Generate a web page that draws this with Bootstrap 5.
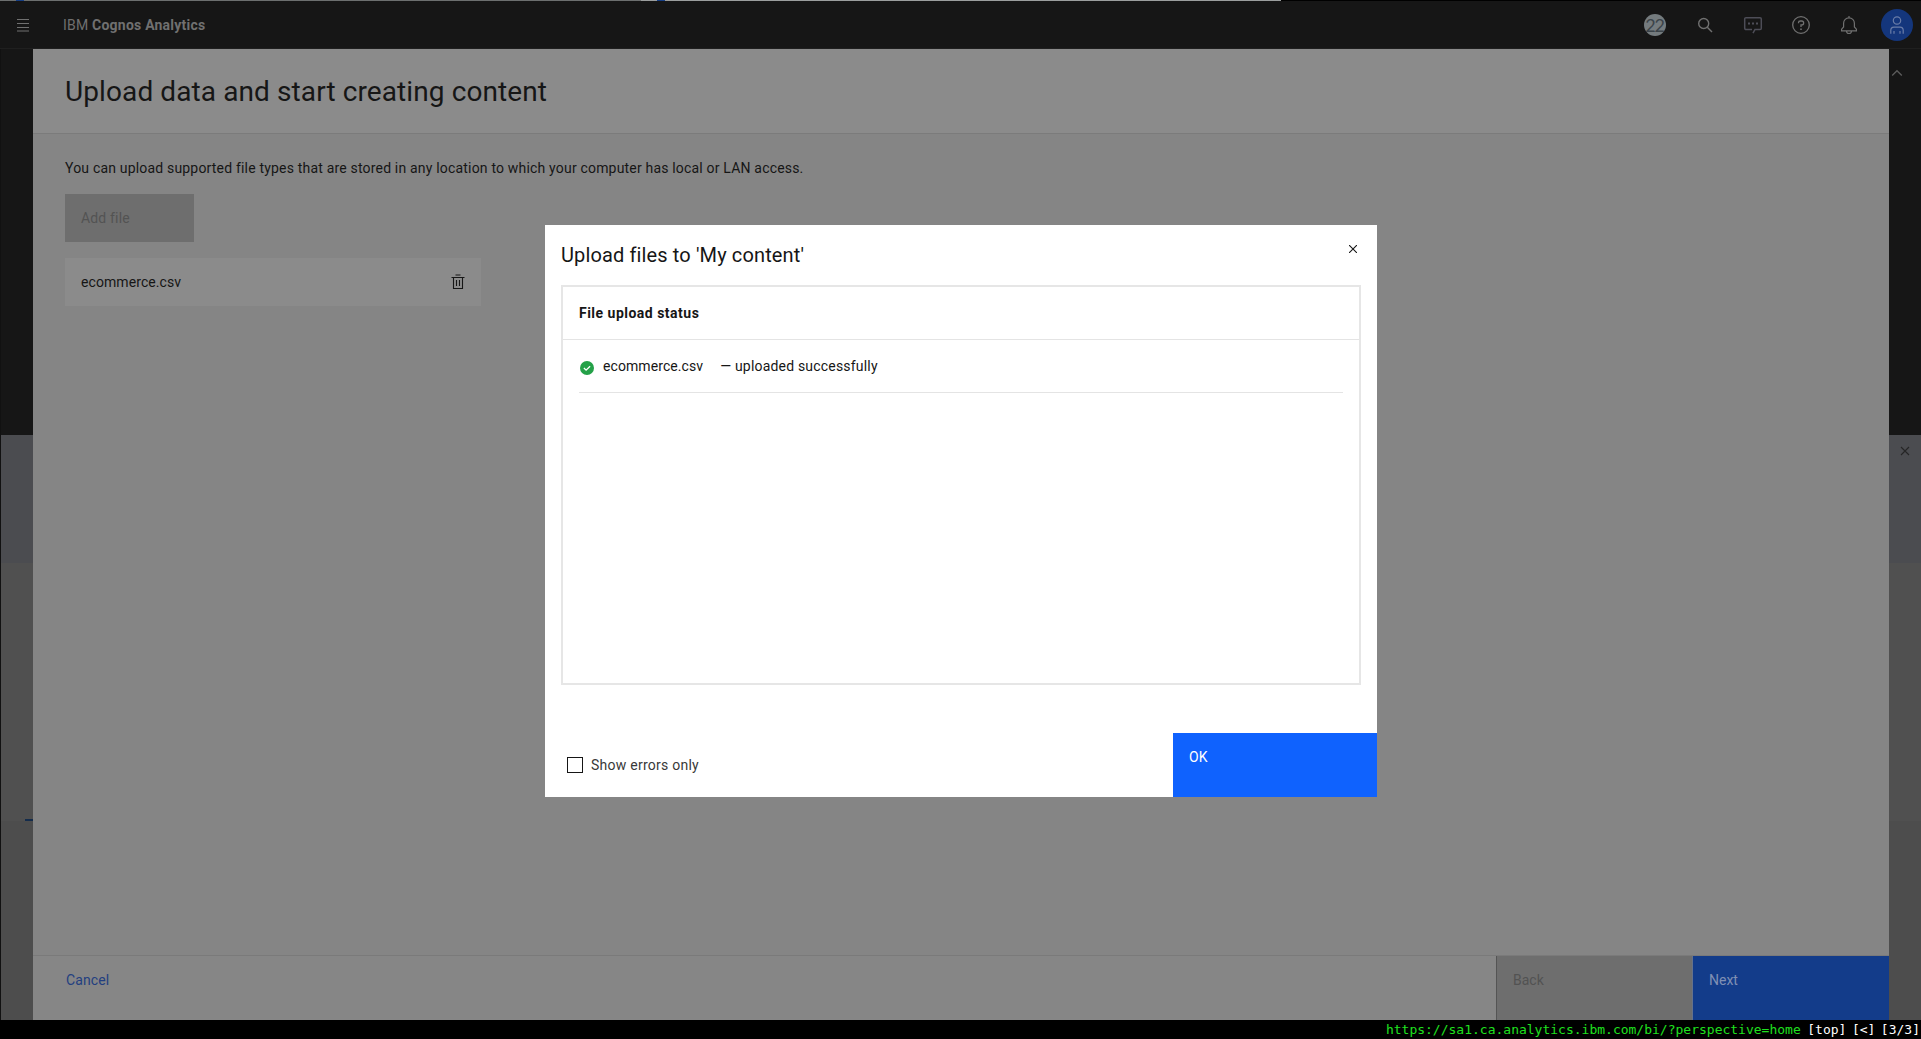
<!DOCTYPE html>
<html lang="en">
<head>
<meta charset="utf-8">
<title>IBM Cognos Analytics</title>
<link href="https://cdn.jsdelivr.net/npm/bootstrap@5.3.0/dist/css/bootstrap.min.css" rel="stylesheet">
<style>
body{width:1921px;height:1039px;overflow:hidden;background:#161616;font-family:Roboto,"Noto Sans",sans-serif;font-size:14px;line-height:18px;color:#161616}
svg{display:block;fill:none;stroke:currentColor;flex:none}
.t{white-space:nowrap}
.tabstrip{height:1px;background:#000}
.tabstrip .tab-a{width:641px;background:#6c6f6f}
.tabstrip .tab-b{width:640px;background:#9b9e9e}
.tabstrip .fav{width:8px;margin-left:16px;background:#163f86}
.appbar{height:48px;border-bottom:1px solid #1f1f1f;color:#707070;padding:0 0 0 16px}
.brand{margin-left:33px;letter-spacing:.22px}
.tool{width:48px;height:46px}
.tool-chat{color:#4d4d57}
.tool-count{padding-right:4px}
.count{width:22px;height:22px;border-radius:50%;background:#747b7e;color:#3b4349;font-size:18px;font-family:Lato,sans-serif;letter-spacing:-1.2px;padding-right:1px}
.avatar{width:32px;height:32px;border-radius:50%;background:#14367c;color:#6a7da8}
.rail{width:33px;background:#4d4d4d;border-left:1px solid #111}
.rail-r{width:32px;border-left:0;color:#5c5c5c}
.band-1{height:386px;background:#161616}
.band-2{height:128px;background:#4b4c50;color:#262626}
.band-3{height:258px;background:#505050}
.dash{width:8px;height:2px;background:#142c4c}
.panel{background:#858585}
.panel-title{height:85px;background:#8b8b8b;border-bottom:1px solid #7b7b7b;padding-left:32px}
.h-page{font-size:28px;line-height:36px;margin-top:25px;letter-spacing:.1px}
.panel-main{padding:25px 32px 0}
.desc{letter-spacing:.185px}
.btn-add{width:129px;height:48px;margin-top:17px;background:#6e6e6e;color:#535353;padding-left:16px;letter-spacing:.16px}
.filerow{width:416px;height:48px;margin-top:16px;background:#8b8b8b;padding:0 15px 0 16px}
.fname{letter-spacing:.08px}
.panel-foot{height:65px;border-top:1px solid #7a7a7a;background:#868686}
.footbtn{width:196px;height:64px;padding:15px 16px}
.cancel{padding:15px 33px;color:#233f80;letter-spacing:.1px}
.back{background:#6e6e6e;color:#525252;border-left:1px solid #545454}
.next{width:197px;background:#133c8a;color:#8090b4;border-left:1px solid #65728c}
.statusbar{height:19px;background:#000;color:#fff;font:13px/19px "DejaVu Sans Mono",monospace;gap:5.500px;padding-right:1px}
.statusbar .url{color:#1fe01f;margin-right:1px}
.layer{z-index:5;padding-top:225px}
.dialog{width:832px;height:572px;background:#fff;margin-left:545px}
.dialog-head{height:60px;padding:16px 20px 0 16px}
.dialog-head svg{margin-top:4px}
.h-dialog{font-size:20px;line-height:28px;letter-spacing:.13px}
.statusbox{height:400px;margin:0 16px;border:2px solid #e6e6e6}
.status-head{height:53px;border-bottom:1px solid #e4e4e4;padding:0 16px;letter-spacing:.49px}
.status-row{height:53px;border-bottom:1px solid #e4e4e4;margin:0 16px}
.result{margin-left:17px;letter-spacing:.19px}
.ok-disc{fill:#24a148;stroke:none}
.ok-tick{stroke:#fff;stroke-width:1.3}
.okbtn{width:204px;height:64px;background:#0f62fe;color:#fff;padding:15px 16px}
.errfilter{padding:24px 0 0 22px}
.cbox{width:16px;height:16px;border:1px solid #161616}
.chk{margin:-1px 0 0 8px;color:#393939;letter-spacing:.25px}
</style>
<script src="https://cdn.jsdelivr.net/npm/bootstrap@5.3.0/dist/js/bootstrap.bundle.min.js"></script>
</head>
<body class="d-flex flex-column position-relative">
<div class="tabstrip d-flex"><div class="tab-a d-flex"><div class="fav"></div></div><div class="tab-b d-flex"><div class="fav"></div></div></div>
<header class="appbar d-flex align-items-center">
  <svg width="14" height="14" viewBox="0 0 14 14"><path d="M1 1.500h12M1 5.500h12M1 9.500h12M1 13h12"/></svg>
  <div class="brand t">IBM <span class="fw-bold">Cognos Analytics</span></div>
  <div class="d-flex ms-auto">
    <div class="tool tool-count d-flex align-items-center justify-content-center"><span class="count d-flex align-items-center justify-content-center">22</span></div>
    <div class="tool d-flex align-items-center justify-content-center"><svg width="16" height="16" viewBox="0 0 16 16" stroke-width="1.4"><circle cx="6.700" cy="6.500" r="5"/><path d="M10.300 10.200l4.700 4.800"/></svg></div>
    <div class="tool tool-chat d-flex align-items-center justify-content-center"><svg width="20" height="20" viewBox="0 0 20 20" stroke-width="1.5"><path d="M10 18.200l2-3.700H17a1.300 1.300 0 0 0 1.300-1.300V4A1.300 1.300 0 0 0 17 2.700H3A1.300 1.300 0 0 0 1.700 4v9.200A1.300 1.300 0 0 0 3 14.500h6"/><path stroke-width="2" d="M5 8.600h2M9 8.600h2M13 8.600h2"/></svg></div>
    <div class="tool d-flex align-items-center justify-content-center"><svg width="20" height="20" viewBox="0 0 20 20" stroke-width="1.3"><circle cx="10" cy="10" r="8.300"/><path d="M7.500 8.300V7.800A1.800 1.800 0 0 1 9.300 6h1.400a1.900 1.900 0 0 1 0 3.900H10v2.200"/><path stroke-width="1.6" d="M9.200 14.200h1.600"/></svg></div>
    <div class="tool d-flex align-items-center justify-content-center"><svg width="20" height="20" viewBox="0 0 20 20" stroke-width="1.2"><path d="M10 1v1.800M4.600 12V8.200a5.400 5.400 0 0 1 10.800 0V12l2 2.200v1.600H2.600v-1.600zM7.500 16a2.500 2.500 0 0 0 5 0"/></svg></div>
    <div class="tool d-flex align-items-center justify-content-center"><span class="avatar d-flex align-items-center justify-content-center"><svg width="20" height="20" viewBox="0 0 20 20" stroke-width="1.2"><circle cx="10" cy="5.500" r="3.700"/><path d="M3.800 18.800v-3.500a3.200 3.200 0 0 1 3.200-3.200h6a3.200 3.200 0 0 1 3.200 3.200v3.500M7 18.800V16M13 18.800V16"/></svg></span></div>
  </div>
</header>
<div class="d-flex flex-fill">
  <div class="rail d-flex flex-column"><div class="band-1"></div><div class="band-2"></div><div class="band-3 d-flex align-items-end justify-content-end"><div class="dash"></div></div></div>
  <main class="panel d-flex flex-column flex-fill">
    <div class="panel-title"><h1 class="h-page t fw-normal mb-0 d-inline-block">Upload data and start creating content</h1></div>
    <div class="panel-main flex-fill">
      <div class="desc t">You can upload supported file types that are stored in any location to which your computer has local or LAN access.</div>
      <div class="btn-add d-flex align-items-center t">Add file</div>
      <div class="filerow d-flex align-items-center justify-content-between"><span class="fname t">ecommerce.csv</span>
        <svg width="16" height="16" viewBox="0 0 16 16" stroke-width="1.1"><path d="M1.500 3.500h13M5.500 1h5M3.500 3.500V14.500h9V3.500M6.500 6v6M9.500 6v6"/></svg></div>
    </div>
    <div class="panel-foot d-flex"><div class="cancel me-auto">Cancel</div><div class="footbtn back">Back</div><div class="footbtn next">Next</div></div>
  </main>
  <div class="rail rail-r d-flex flex-column">
    <div class="band-1"><svg class="mt-3" width="16" height="16" viewBox="0 0 16 16" stroke-width="1.3"><path d="M3.200 10.500L8 5.700l4.800 4.800"/></svg></div>
    <div class="band-2 d-flex justify-content-center"><svg class="mt-2" width="16" height="16" viewBox="0 0 16 16" stroke-width="1.1"><path d="M4 4l8 8M12 4l-8 8"/></svg></div>
    <div class="band-3"></div>
  </div>
</div>
<div class="statusbar d-flex justify-content-end"><span class="url">https://sa1.ca.analytics.ibm.com/bi/?perspective=home</span><span>[top]</span><span>[&lt;]</span><span>[3/3]</span></div>
<div class="layer position-absolute top-0 start-0">
  <section class="dialog d-flex flex-column" role="dialog">
    <div class="dialog-head d-flex justify-content-between"><h2 class="h-dialog t fw-normal mb-0">Upload files to 'My content'</h2>
      <svg width="8" height="8" viewBox="0 0 8 8" stroke-width="1.1"><path d="M0 0l8 8M8 0L0 8"/></svg></div>
    <div class="statusbox">
      <div class="status-head d-flex align-items-center fw-bold t">File upload status</div>
      <div class="status-row d-flex align-items-center">
        <svg class="mt-1" width="16" height="16" viewBox="0 0 16 16"><circle class="ok-disc" cx="8" cy="8" r="7"/><path class="ok-tick" d="M4.900 8l2.200 2.200 4-4"/></svg>
        <span class="fname t ms-2">ecommerce.csv</span><span class="result t">— uploaded successfully</span>
      </div>
    </div>
    <div class="d-flex mt-auto">
      <label class="errfilter d-flex me-auto"><span class="cbox"></span><span class="chk t">Show errors only</span></label>
      <div class="okbtn">OK</div>
    </div>
  </section>
</div>
</body>
</html>
